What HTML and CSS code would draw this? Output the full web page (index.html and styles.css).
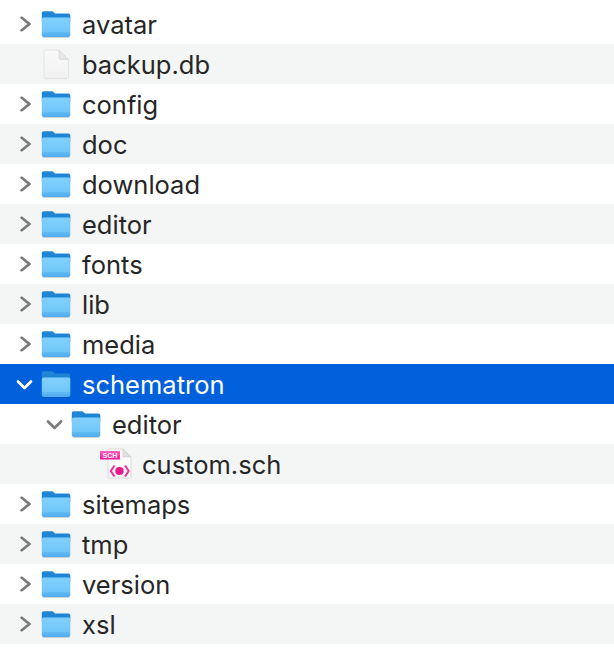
FILE: index.html
```html
<!DOCTYPE html>
<html lang="en">
<head>
<meta charset="utf-8">
<title>Files</title>
<link rel="stylesheet" href="styles.css">
</head>
<body>
<svg class="defs" width="0" height="0" aria-hidden="true">
  <defs>
    <linearGradient id="fb" x1="0" y1="0" x2="0" y2="1">
      <stop offset="0" stop-color="#82d0fc"/>
      <stop offset="0.76" stop-color="#70c6fa"/>
      <stop offset="0.77" stop-color="#5fb9f4"/>
      <stop offset="1" stop-color="#4fabec"/>
    </linearGradient>
    <linearGradient id="badge" x1="0" y1="0" x2="0" y2="1">
      <stop offset="0" stop-color="#ff62c2"/>
      <stop offset="1" stop-color="#f0189a"/>
    </linearGradient>
    <linearGradient id="sheet" x1="0" y1="0" x2="0" y2="1">
      <stop offset="0" stop-color="#f9f9f9"/>
      <stop offset="1" stop-color="#f1f1f1"/>
    </linearGradient>
    <symbol id="folder" viewBox="0 0 30 28">
      <path d="M.8 24V3.200C.8 2 1.600 1.200 2.800 1.200H10.500C11.500 1.200 12 1.600 12.700 2.200L14 3.600H27.300C28.500 3.600 29.300 4.400 29.300 5.600V12H.8Z" fill="#1f86d6"/>
      <path d="M.8 9.500C.8 8.300 1.600 7.500 2.800 7.500H27.300C28.500 7.500 29.300 8.300 29.300 9.500V25C29.300 26.200 28.500 27 27.300 27H2.800C1.600 27 .8 26.200 .8 25Z" fill="url(#fb)"/>
      <path d="M1.500 27.500H28.600" stroke="#000" stroke-opacity=".2" stroke-width=".8"/>
    </symbol>
    <symbol id="chev-r" viewBox="0 0 12 16">
      <path d="M1.700 1.800L9.500 8L1.700 14.200" fill="none" stroke="currentColor" stroke-width="2.700" stroke-linecap="round" stroke-linejoin="round"/>
    </symbol>
    <symbol id="chev-d" viewBox="-6 0 20 12">
      <path d="M-4 3.500L2.500 10L9 3.500" fill="none" stroke="currentColor" stroke-width="2.700" stroke-linecap="round" stroke-linejoin="round"/>
    </symbol>
  </defs>
</svg>
<ul class="list">
  <li class="row"><span class="disc"><svg class="chev"><use href="#chev-r"/></svg></span><svg class="ico"><use href="#folder"/></svg><span class="name">avatar</span></li>
  <li class="row"><span class="disc"></span><svg class="ico doc" viewBox="0 0 30 30"><path d="M3 1H18L27.500 10.500V28.500C27.500 29.200 27 29.700 26.300 29.700H4.200C3.500 29.700 3 29.200 3 28.500Z" fill="url(#sheet)" stroke="#dedede" stroke-width=".8"/><path d="M18 1V9.300C18 10 18.500 10.500 19.200 10.500H27.500Z" fill="#e6e6e6" stroke="#d4d4d4" stroke-width=".6"/></svg><span class="name">backup.db</span></li>
  <li class="row"><span class="disc"><svg class="chev"><use href="#chev-r"/></svg></span><svg class="ico"><use href="#folder"/></svg><span class="name">config</span></li>
  <li class="row"><span class="disc"><svg class="chev"><use href="#chev-r"/></svg></span><svg class="ico"><use href="#folder"/></svg><span class="name">doc</span></li>
  <li class="row"><span class="disc"><svg class="chev"><use href="#chev-r"/></svg></span><svg class="ico"><use href="#folder"/></svg><span class="name">download</span></li>
  <li class="row"><span class="disc"><svg class="chev"><use href="#chev-r"/></svg></span><svg class="ico"><use href="#folder"/></svg><span class="name">editor</span></li>
  <li class="row"><span class="disc"><svg class="chev"><use href="#chev-r"/></svg></span><svg class="ico"><use href="#folder"/></svg><span class="name">fonts</span></li>
  <li class="row"><span class="disc"><svg class="chev"><use href="#chev-r"/></svg></span><svg class="ico"><use href="#folder"/></svg><span class="name">lib</span></li>
  <li class="row"><span class="disc"><svg class="chev"><use href="#chev-r"/></svg></span><svg class="ico"><use href="#folder"/></svg><span class="name">media</span></li>
  <li class="row selected"><span class="disc"><svg class="chev-open"><use href="#chev-d"/></svg></span><svg class="ico"><use href="#folder"/></svg><span class="name">schematron</span></li>
  <li class="row depth1"><span class="disc"><svg class="chev-open"><use href="#chev-d"/></svg></span><svg class="ico"><use href="#folder"/></svg><span class="name">editor</span></li>
  <li class="row depth2"><span class="disc"></span><svg class="ico doc" viewBox="0 0 30 30"><path d="M7 0H22L30 8V28C30 28.600 29.600 29 29 29H8C7.400 29 7 28.600 7 28Z" fill="#fbfbfb" stroke="#d2d2d2" stroke-width=".8"/><path d="M22 0V8H30Z" fill="#e2e2e2" stroke="#c8c8c8" stroke-width=".6"/><rect x="-1" y="2" width="20" height="8.500" fill="url(#badge)"/><text x="9" y="8.800" class="badge">SCH</text><path d="M13.500 16.500L9.800 22L13.500 27.500M24 16.500L27.700 22L24 27.500" fill="none" stroke="#f02ea2" stroke-width="2"/><ellipse cx="18.500" cy="22" rx="4.200" ry="4" fill="#e8178e"/></svg><span class="name">custom.sch</span></li>
  <li class="row"><span class="disc"><svg class="chev"><use href="#chev-r"/></svg></span><svg class="ico"><use href="#folder"/></svg><span class="name">sitemaps</span></li>
  <li class="row"><span class="disc"><svg class="chev"><use href="#chev-r"/></svg></span><svg class="ico"><use href="#folder"/></svg><span class="name">tmp</span></li>
  <li class="row"><span class="disc"><svg class="chev"><use href="#chev-r"/></svg></span><svg class="ico"><use href="#folder"/></svg><span class="name">version</span></li>
  <li class="row"><span class="disc"><svg class="chev"><use href="#chev-r"/></svg></span><svg class="ico"><use href="#folder"/></svg><span class="name">xsl</span></li>
</ul>
</body>
</html>
```
FILE: styles.css
```css
html, body {
  margin: 0;
  padding: 0;
  background: #fff;
}
body {
  height: 664px;
  overflow: hidden;
  font-family: "Inter", "Liberation Sans", sans-serif;
}
.defs {
  position: absolute;
}
.list {
  list-style: none;
  margin: 0;
  padding: 4px 0 0;
}
.row {
  display: flex;
  align-items: center;
  height: 40px;
  padding-left: 16px;
  color: #262626;
  font-size: 25.5px;
}
.row:nth-child(even) {
  background: #f4f5f5;
}
.row.depth1 {
  padding-left: 46px;
  background: #fff;
}
.row.depth2 {
  padding-left: 76px;
  background: #f4f5f5;
}
.row.selected {
  background: #0160dc;
  color: #fff;
}
.row.selected .disc {
  color: #fff;
}
.disc {
  display: flex;
  align-items: center;
  justify-content: center;
  width: 20px;
  height: 40px;
  margin-right: 5px;
  color: #7a7a7a;
}
.chev {
  width: 12px;
  height: 16px;
}
.chev-open {
  width: 20px;
  height: 12px;
  flex: none;
}
.ico {
  width: 30px;
  height: 28px;
  flex: none;
  margin-right: 11px;
}
.ico.doc {
  height: 30px;
  overflow: visible;
}
.badge {
  fill: #fff;
  font-size: 7px;
  font-weight: 700;
  text-anchor: middle;
  font-family: "Liberation Sans", sans-serif;
}
.name {
  white-space: nowrap;
  line-height: 40px;
  padding-top: 2px;
}
```
